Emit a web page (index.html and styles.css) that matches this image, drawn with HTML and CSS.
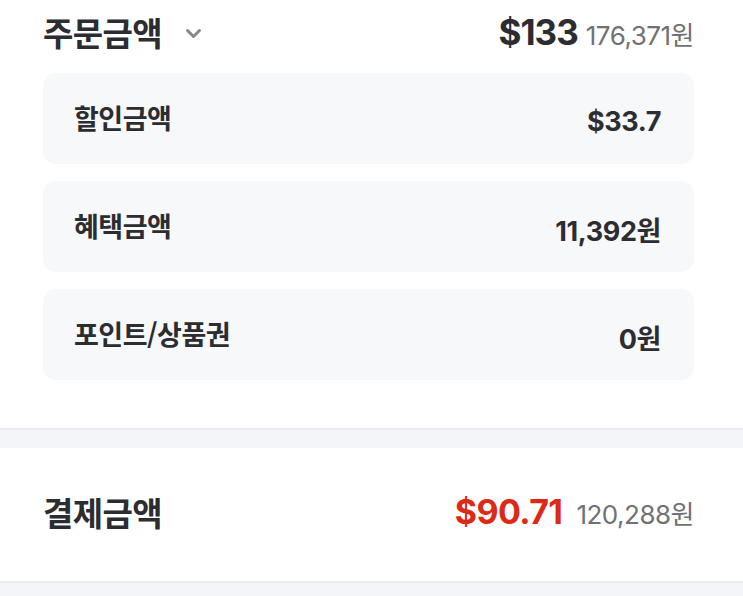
FILE: index.html
```html
<!DOCTYPE html>
<html lang="ko">
<head>
<meta charset="utf-8">
<link rel="stylesheet" href="styles.css">
</head>
<body>
<section class="order">
  <div class="order-head">
    <div class="head-title">
      <span class="title">주문금액</span>
      <svg class="chev" width="17" height="11" viewBox="0 0 17 11"><path d="M2.5 2.5 L8.5 8.5 L14.5 2.5" fill="none" stroke="#85878b" stroke-width="3" stroke-linecap="round" stroke-linejoin="round"/></svg>
    </div>
    <div class="head-amount">
      <span class="usd">$133</span>
      <span class="krw">176,371원</span>
    </div>
  </div>
  <div class="cards">
    <div class="card"><span class="label">할인금액</span><span class="value">$33.7</span></div>
    <div class="card"><span class="label">혜택금액</span><span class="value">11,392원</span></div>
    <div class="card"><span class="label">포인트/상품권</span><span class="value">0원</span></div>
  </div>
</section>
<div class="divider"></div>
<section class="pay">
  <span class="title">결제금액</span>
  <div class="head-amount">
    <span class="usd red">$90.71</span>
    <span class="krw">120,288원</span>
  </div>
</section>
<div class="footer-band"></div>
</body>
</html>
```

FILE: styles.css
```css
html, body {
  margin: 0;
  padding: 0;
  background: #ffffff;
  font-family: "Inter", "Noto Sans CJK KR", sans-serif;
  color: #2b2d31;
}
.order {
  padding: 0 49px 48px 43px;
}
.order-head {
  height: 73px;
  display: flex;
  align-items: center;
  justify-content: space-between;
  padding-bottom: 10px;
  box-sizing: border-box;
}
.head-title {
  display: flex;
  align-items: center;
  gap: 23px;
}
.title {
  font-family: "Noto Sans CJK KR", sans-serif;
  font-weight: 700;
  font-size: 33px;
  letter-spacing: -0.6px;
  color: #2b2d31;
}
.chev {
  display: block;
  margin-top: 3px;
}
.head-amount {
  display: flex;
  align-items: baseline;
  gap: 8px;
}
.usd {
  font-family: "Inter", sans-serif;
  font-weight: 700;
  font-size: 35px;
  letter-spacing: -1px;
  color: #2b2d31;
}
.usd.red {
  font-size: 34px;
  letter-spacing: -0.6px;
  color: #dc2a17;
  margin-right: 6px;
}
.krw {
  font-family: "Inter", "Noto Sans CJK KR", sans-serif;
  font-weight: 400;
  font-size: 26px;
  letter-spacing: -0.5px;
  color: #6f7175;
}
.cards {
  display: flex;
  flex-direction: column;
  gap: 17px;
}
.card {
  height: 91px;
  background: #f7f8fa;
  border-radius: 13px;
  display: flex;
  align-items: center;
  justify-content: space-between;
  padding: 0 33px 0 31px;
  box-sizing: border-box;
}
.label {
  font-family: "Noto Sans CJK KR", sans-serif;
  font-weight: 700;
  font-size: 27px;
  letter-spacing: -0.5px;
  color: #2b2d31;
  margin-top: -2px;
}
.value {
  font-family: "Inter", "Noto Sans CJK KR", sans-serif;
  font-weight: 700;
  font-size: 27px;
  letter-spacing: -0.4px;
  color: #2b2d31;
  margin-top: 5px;
}
.divider {
  height: 20px;
  background: #f4f5f8;
  border-top: 2px solid #ebecef;
  box-sizing: border-box;
}
.pay {
  height: 133px;
  display: flex;
  align-items: center;
  justify-content: space-between;
  padding: 0 49px 6px 43px;
  box-sizing: border-box;
}
.footer-band {
  height: 15px;
  background: #f4f5f8;
  border-top: 2px solid #ebecef;
  box-sizing: border-box;
}
```
